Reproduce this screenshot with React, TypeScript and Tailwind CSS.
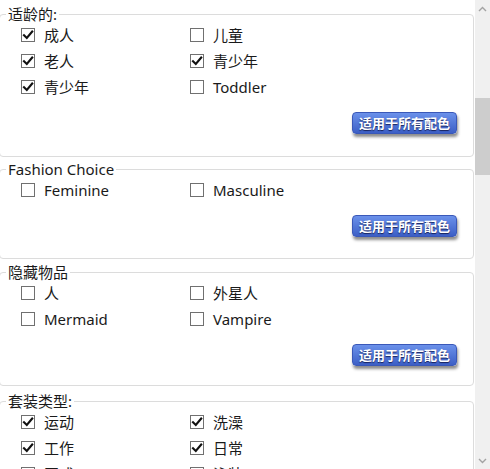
import React from "react";

type Item = { label: string; checked: boolean };

const GROUPS: { title: string; items: Item[]; button?: boolean; gap: string; pb: string }[] = [
  {
    title: "适龄的:",
    gap: "mt-[4px]",
    pb: "pb-[22px]",
    button: true,
    items: [
      { label: "成人", checked: true },
      { label: "儿童", checked: false },
      { label: "老人", checked: true },
      { label: "青少年", checked: true },
      { label: "青少年", checked: true },
      { label: "Toddler", checked: false },
    ],
  },
  {
    title: "Fashion Choice",
    gap: "mt-[2px]",
    pb: "pb-[21px]",
    button: true,
    items: [
      { label: "Feminine", checked: false },
      { label: "Masculine", checked: false },
    ],
  },
  {
    title: "隐藏物品",
    gap: "mt-[3px]",
    pb: "pb-[19px]",
    button: true,
    items: [
      { label: "人", checked: false },
      { label: "外星人", checked: false },
      { label: "Mermaid", checked: false },
      { label: "Vampire", checked: false },
    ],
  },
  {
    title: "套装类型:",
    gap: "mt-[5px]",
    pb: "pb-[20px]",
    items: [
      { label: "运动", checked: true },
      { label: "洗澡", checked: true },
      { label: "工作", checked: true },
      { label: "日常", checked: true },
      { label: "正式", checked: false },
      { label: "泳装", checked: false },
    ],
  },
];

function Checkbox({ checked }: { checked: boolean }) {
  return (
    <span className="flex h-[14px] w-[14px] shrink-0 items-center justify-center border border-[#707070] bg-white">
      {checked && (
        <svg width="12" height="12" viewBox="0 0 12 12" fill="none">
          <path d="M2 6.2 L4.8 9 L10.2 2.6" stroke="#111" strokeWidth="2.1" strokeLinecap="square" />
        </svg>
      )}
    </span>
  );
}

function ApplyButton() {
  return (
    <div className="flex justify-end">
      <button className="h-[22px] rounded-[4px] border border-[#3a58b8] bg-gradient-to-b from-[#6b91ea] to-[#3c5fc6] px-[6px] text-[13px] font-bold leading-[20px] text-white shadow-[1px_3px_3px_rgba(0,0,0,0.45)] [text-shadow:0_1px_1px_rgba(0,0,40,0.7)]">
        适用于所有配色
      </button>
    </div>
  );
}

function Group({ title, items, button, gap, pb }: (typeof GROUPS)[number]) {
  return (
    <fieldset className={`${gap} ${pb} -ml-px mr-px rounded-[4px] border border-[#dcdcdc] px-[6px] pt-0`}>
      <legend className="px-[2px] text-[15px] leading-[20px] text-[#1a1a1a]">{title}</legend>
      <div className="-mt-[2px] grid grid-cols-[169px_1fr] pl-[15px]">
        {items.map((it, i) => (
          <label key={i} className="flex h-[26px] items-center gap-[9px] text-[15px] text-[#1a1a1a]">
            <Checkbox checked={it.checked} />
            <span>{it.label}</span>
          </label>
        ))}
      </div>
      {button && (
        <div className="mt-[12px] pr-[10px]">
          <ApplyButton />
        </div>
      )}
    </fieldset>
  );
}

function Scrollbar() {
  return (
    <div className="flex w-[15px] shrink-0 flex-col bg-[#f0f0f0]">
      <div className="flex h-[17px] items-center justify-center">
        <svg width="9" height="6" viewBox="0 0 9 6">
          <path d="M1 5 L4.5 1.5 L8 5" stroke="#a3a3a3" strokeWidth="1.4" fill="none" />
        </svg>
      </div>
      <div className="h-[81px]" />
      <div className="h-[77px] bg-[#cdcdcd]" />
      <div className="flex-1" />
      <div className="flex h-[17px] items-center justify-center">
        <svg width="9" height="6" viewBox="0 0 9 6">
          <path d="M1 1 L4.5 4.5 L8 1" stroke="#a3a3a3" strokeWidth="1.4" fill="none" />
        </svg>
      </div>
    </div>
  );
}

export default function App() {
  return (
    <div
      className="flex h-[469px] w-[490px] overflow-hidden bg-white"
      style={{ fontFamily: '"Noto Sans", "Noto Sans CJK SC", sans-serif' }}
    >
      <div className="flex-1 overflow-hidden">
        {GROUPS.map((g, i) => (
          <Group key={i} {...g} />
        ))}
      </div>
      <Scrollbar />
    </div>
  );
}
